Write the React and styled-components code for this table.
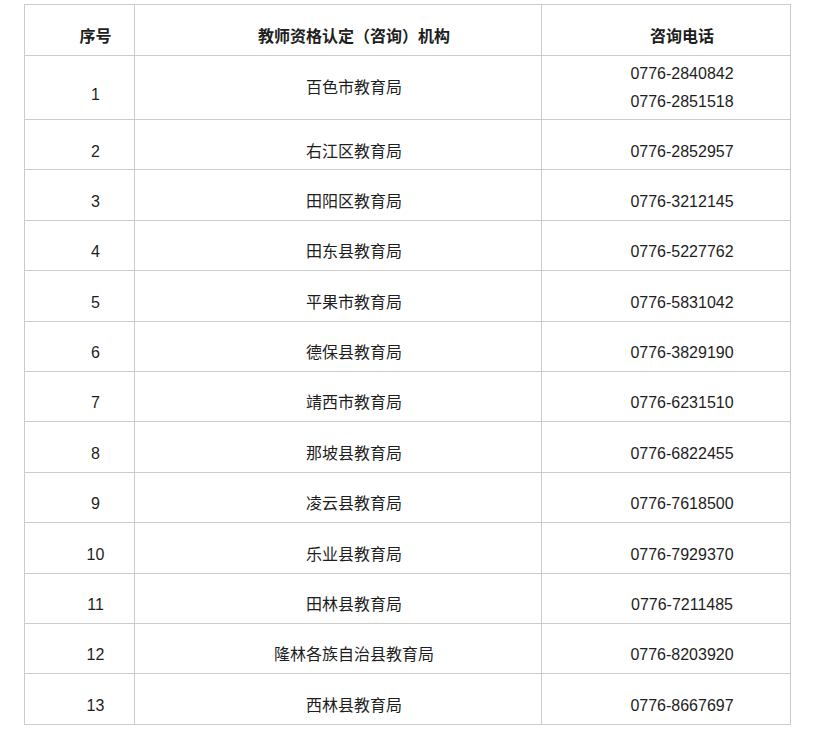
import React from 'react';
import styled, { createGlobalStyle } from 'styled-components';

const GlobalStyle = createGlobalStyle`
  body {
    margin: 0;
    background: #fff;
    font-family: "Liberation Sans", Arial, "Noto Sans CJK SC", sans-serif;
  }
`;

const Page = styled.div`
  padding: 4px 0 0 24px;
`;

const Table = styled.table`
  width: 766px;
  border-collapse: collapse;
  table-layout: fixed;
  font-size: 16px;
  color: #1e1e1e;
`;

const HeadCell = styled.th`
  border: 1px solid #ccc;
  padding: 18px 0 4px;
  line-height: 28px;
  font-weight: bold;
  text-align: center;
  text-indent: 2em;
  vertical-align: middle;
`;

const Cell = styled.td`
  border: 1px solid #ccc;
  padding: ${(p) => (p.$tight ? '4px 0 3px' : p.$shift ? '14px 0 0' : '17.5px 0 3.9px')};
  line-height: 28px;
  text-align: center;
  text-indent: 2em;
  vertical-align: middle;
`;

const Line = styled.div`
  line-height: 28px;
`;

const rows = [
  ['2', '右江区教育局', '0776-2852957'],
  ['3', '田阳区教育局', '0776-3212145'],
  ['4', '田东县教育局', '0776-5227762'],
  ['5', '平果市教育局', '0776-5831042'],
  ['6', '德保县教育局', '0776-3829190'],
  ['7', '靖西市教育局', '0776-6231510'],
  ['8', '那坡县教育局', '0776-6822455'],
  ['9', '凌云县教育局', '0776-7618500'],
  ['10', '乐业县教育局', '0776-7929370'],
  ['11', '田林县教育局', '0776-7211485'],
  ['12', '隆林各族自治县教育局', '0776-8203920'],
  ['13', '西林县教育局', '0776-8667697'],
];

export default function App() {
  return (
    <Page>
      <GlobalStyle />
      <Table>
        <colgroup>
          <col style={{ width: 110 }} />
          <col style={{ width: 407 }} />
          <col style={{ width: 249 }} />
        </colgroup>
        <thead>
          <tr>
            <HeadCell>序号</HeadCell>
            <HeadCell>教师资格认定（咨询）机构</HeadCell>
            <HeadCell>咨询电话</HeadCell>
          </tr>
        </thead>
        <tbody>
          <tr>
            <Cell $shift>1</Cell>
            <Cell $tight>百色市教育局</Cell>
            <Cell $tight>
              <Line>0776-2840842</Line>
              <Line>0776-2851518</Line>
            </Cell>
          </tr>
          {rows.map(([no, org, tel]) => (
            <tr key={no}>
              <Cell>{no}</Cell>
              <Cell>{org}</Cell>
              <Cell>{tel}</Cell>
            </tr>
          ))}
        </tbody>
      </Table>
    </Page>
  );
}
